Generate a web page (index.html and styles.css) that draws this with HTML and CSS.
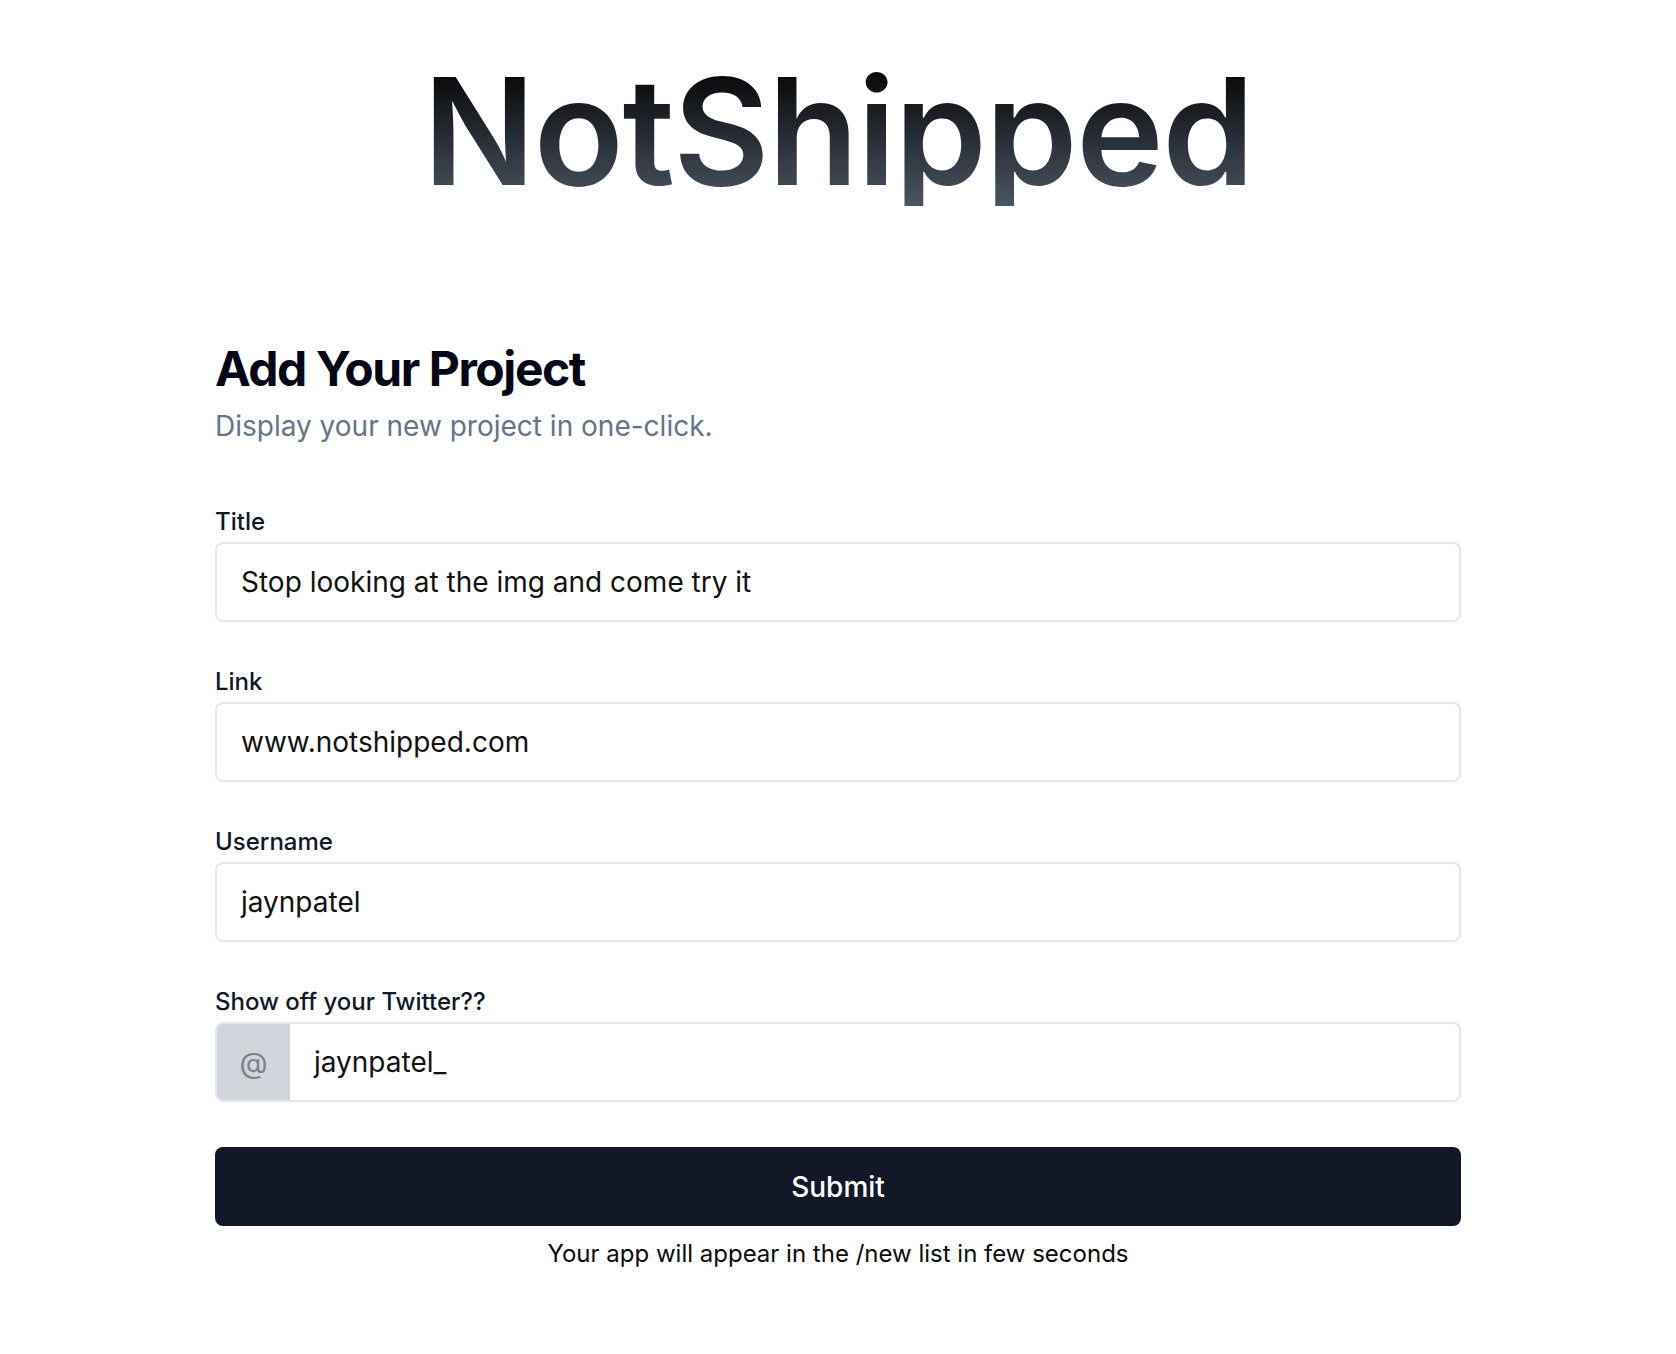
FILE: index.html
```html
<!DOCTYPE html>
<html lang="en">
<head>
<meta charset="utf-8">
<title>NotShipped</title>
<link rel="stylesheet" href="styles.css">
</head>
<body>
<main class="page">
  <header class="brand">
    <h1 class="brand-title">NotShipped</h1>
  </header>
  <section class="form-wrap">
    <h2 class="form-heading">Add Your Project</h2>
    <p class="form-sub">Display your new project in one-click.</p>
    <form class="form">
      <div class="field">
        <label class="label">Title</label>
        <div class="input">Stop looking at the img and come try it</div>
      </div>
      <div class="field">
        <label class="label">Link</label>
        <div class="input">www.notshipped.com</div>
      </div>
      <div class="field">
        <label class="label">Username</label>
        <div class="input">jaynpatel</div>
      </div>
      <div class="field field-last">
        <label class="label">Show off your Twitter??</label>
        <div class="input input-group">
          <span class="addon">@</span>
          <span class="group-text">jaynpatel_</span>
        </div>
      </div>
      <button type="button" class="submit">Submit</button>
      <p class="note">Your app will appear in the /new list in few seconds</p>
    </form>
  </section>
</main>
</body>
</html>
```

FILE: styles.css
```css
* { box-sizing: border-box; }
html, body { margin: 0; padding: 0; background: #ffffff; }
body {
  font-family: Inter, "Noto Sans", "Liberation Sans", sans-serif;
  color: #111827;
}
.page {
  display: flex;
  flex-direction: column;
  align-items: center;
  padding-top: 58px;
}
.brand { display: flex; justify-content: center; width: 100%; }
.brand-title {
  margin: 0;
  font-size: 148px;
  line-height: 1;
  font-weight: 600;
  letter-spacing: -0.01em;
  background: linear-gradient(to bottom, #000000, #4b5563);
  -webkit-background-clip: text;
  background-clip: text;
  color: transparent;
}
.form-wrap {
  width: 1246px;
  margin-top: 139px;
  display: flex;
  flex-direction: column;
}
.form-heading {
  margin: 0;
  font-size: 48px;
  line-height: 1;
  font-weight: 700;
  letter-spacing: -0.03em;
  color: #020617;
}
.form-sub {
  margin: 15px 0 0;
  font-size: 28px;
  line-height: 36px;
  color: #64748b;
}
.form {
  margin-top: 62px;
  display: flex;
  flex-direction: column;
}
.field {
  display: flex;
  flex-direction: column;
  gap: 4px;
  margin-bottom: 44px;
}
.field-last { margin-bottom: 45px; }
.label {
  font-size: 24px;
  line-height: 32px;
  font-weight: 500;
  color: #0f172a;
}
.input {
  height: 80px;
  border: 2px solid #e2e8f0;
  border-radius: 8px;
  display: flex;
  align-items: center;
  padding: 0 24px;
  font-size: 28px;
  color: #111111;
}
.input-group { padding: 0; overflow: hidden; }
.addon {
  width: 73px;
  align-self: stretch;
  display: flex;
  align-items: center;
  justify-content: center;
  background: #d1d5db;
  color: #7b7f86;
  font-size: 29px;
}
.group-text { padding-left: 24px; }
.submit {
  height: 79px;
  width: 100%;
  border: 0;
  border-radius: 8px;
  background: #131829;
  color: #ffffff;
  font-family: inherit;
  font-size: 28px;
  font-weight: 500;
}
.note {
  margin: 12px 0 0;
  text-align: center;
  font-size: 24px;
  line-height: 32px;
  color: #0a0a0a;
}
```
